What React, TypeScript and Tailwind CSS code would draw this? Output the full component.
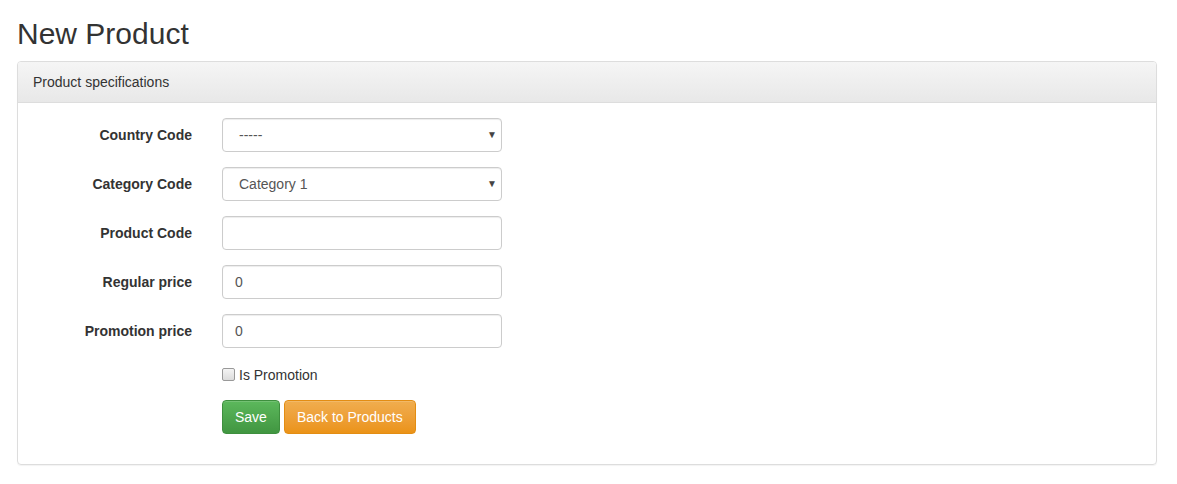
import React from "react";

const font = { fontFamily: '"Liberation Sans", Arial, Helvetica, sans-serif' };

function Row({ label, children }: { label: string; children: React.ReactNode }) {
  return (
    <div className="flex mb-[15px]">
      <label className="w-[159px] pt-[7px] text-right font-bold text-[14px] leading-[20px] text-[#333] shrink-0">
        {label}
      </label>
      <div className="pl-[30px]">{children}</div>
    </div>
  );
}

function Select({ value }: { value: string }) {
  return (
    <div className="relative w-[280px] h-[34px] border border-[#ccc] rounded-[4px] bg-white shadow-[inset_0_1px_1px_rgba(0,0,0,0.075)] pl-[16px] text-[14px] leading-[32px] text-[#555]">
      {value}
      <span className="absolute right-[4px] top-0 text-[10px] text-[#444] leading-[32px]">▼</span>
    </div>
  );
}

function Input({ value }: { value: string }) {
  return (
    <div className="w-[280px] h-[34px] border border-[#ccc] rounded-[4px] bg-white shadow-[inset_0_1px_1px_rgba(0,0,0,0.075)] px-[12px] text-[14px] leading-[32px] text-[#555]">
      {value}
    </div>
  );
}

export default function App() {
  return (
    <div style={font} className="bg-white min-h-[484px] pt-[17px] pl-[17px] pr-[20px] text-[#333]">
      <h1 className="text-[30px] leading-[33px] font-normal mb-[11px] text-[#333]">New Product</h1>
      <div className="border border-[#ddd] rounded-[4px] shadow-[0_1px_1px_rgba(0,0,0,0.05)]">
        <div className="h-[41px] px-[15px] py-[10px] text-[14px] leading-[20px] text-[#333] border-b border-[#ddd] rounded-t-[3px] bg-gradient-to-b from-[#f5f5f5] to-[#e8e8e8]">
          Product specifications
        </div>
        <div className="p-[15px]">
          <Row label="Country Code"><Select value="-----" /></Row>
          <Row label="Category Code"><Select value="Category 1" /></Row>
          <Row label="Product Code"><Input value="" /></Row>
          <Row label="Regular price"><Input value="0" /></Row>
          <Row label="Promotion price"><Input value="0" /></Row>
          <div className="pl-[189px] h-[23px] mb-[14px] flex items-center">
            <span className="w-[13px] h-[13px] border border-[#999] rounded-[2px] bg-gradient-to-b from-[#f4f4f4] to-[#dcdcdc] mr-[4px]"></span>
            <span className="text-[14px] leading-[20px] text-[#333]">Is Promotion</span>
          </div>
          <div className="pl-[189px] flex gap-[4px] mb-[15px]">
            <button className="h-[34px] px-[12px] rounded-[4px] border border-[#3e8f3e] text-white text-[14px] bg-gradient-to-b from-[#5cb85c] to-[#419641] shadow-[inset_0_1px_0_rgba(255,255,255,0.15)]">
              Save
            </button>
            <button className="h-[34px] px-[12px] rounded-[4px] border border-[#e38d13] text-white text-[14px] bg-gradient-to-b from-[#f0ad4e] to-[#eb9316] shadow-[inset_0_1px_0_rgba(255,255,255,0.15)]">
              Back to Products
            </button>
          </div>
        </div>
      </div>
    </div>
  );
}
